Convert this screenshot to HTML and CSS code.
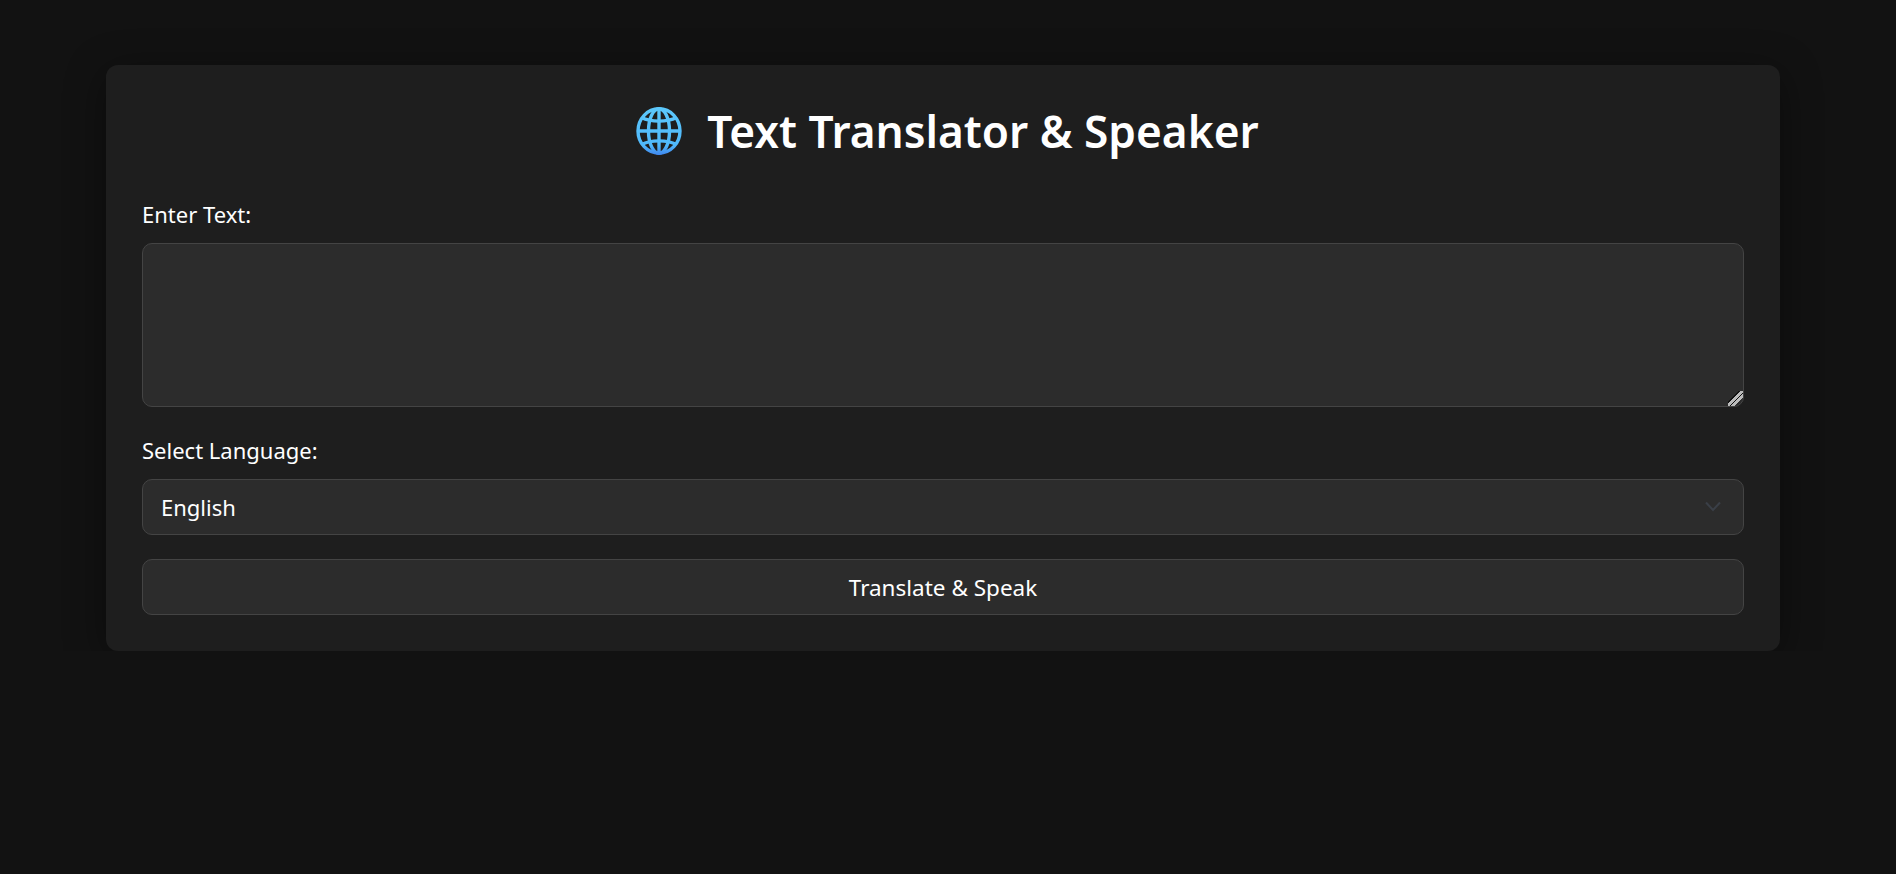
FILE: index.html
```html
<!DOCTYPE html>
<html lang="en">
<head>
<meta charset="UTF-8" />
<meta name="viewport" content="width=device-width, initial-scale=1" />
<title>Text Translator &amp; Speaker</title>
<link rel="stylesheet" href="styles.css">
</head>
<body>
  <div class="container">
    <h1>
      <svg class="globe" viewBox="0 0 46 48" aria-hidden="true">
        <defs>
          <linearGradient id="globeFill" gradientUnits="userSpaceOnUse" x1="0" y1="0" x2="0" y2="48">
            <stop offset="0" stop-color="#5cc8fb" />
            <stop offset="0.8" stop-color="#4fb8fb" />
            <stop offset="1" stop-color="#3f86ee" />
          </linearGradient>
        </defs>
        <g fill="none" stroke="url(#globeFill)" stroke-width="3.4">
          <ellipse cx="23" cy="24" rx="21" ry="22.2" />
          <ellipse cx="23" cy="24" rx="10.5" ry="22.2" />
          <path d="M23 2v44" />
          <path d="M2 24h42" />
          <path d="M5.500 10.500c5 2.600 11 3.600 17.500 3.600s12.500-1 17.500-3.600" />
          <path d="M5.500 37.500c5-2.600 11-3.600 17.500-3.600s12.500 1 17.500 3.600" />
        </g>
      </svg>
      <span>Text Translator &amp; Speaker</span>
    </h1>

    <label for="textInput">Enter Text:</label>
    <textarea id="textInput"></textarea>

    <label for="languageSelect">Select Language:</label>
    <div class="select-wrap">
      <select id="languageSelect">
        <option value="en" selected>English</option>
        <option value="es">Spanish</option>
        <option value="fr">French</option>
        <option value="de">German</option>
        <option value="hi">Hindi</option>
      </select>
      <svg class="chevron" viewBox="0 0 16 16" aria-hidden="true">
        <path d="M1 3.500l7 7.500 7-7.500" fill="none" stroke="#3a3f47" stroke-width="2" />
      </svg>
    </div>

    <button id="translateBtn">Translate &amp; Speak</button>
  </div>
</body>
</html>
```

FILE: styles.css
```css
body {
  font-family: 'Noto Sans', 'Open Sans', sans-serif;
  background: #121212;
  color: #fff;
  margin: 0;
  padding: 65px 10px 0 0;
}
.container {
  width: 1674px;
  margin: 0 auto;
  padding: 36px;
  box-sizing: border-box;
  background: #1e1e1e;
  border-radius: 12px;
  box-shadow: 0 8px 40px rgba(0,0,0,0.4);
}
h1 {
  display: flex;
  justify-content: center;
  align-items: center;
  gap: 25px;
  margin: 0 0 38px;
  font-size: 44.2px;
  line-height: 60px;
  font-weight: 600;
}
.globe {
  width: 46px;
  height: 48px;
  margin-left: 9px;
}
label {
  display: block;
  font-size: 22px;
  line-height: 30px;
  margin-bottom: 14px;
}
textarea, select, button {
  display: block;
  width: 100%;
  box-sizing: border-box;
  background: #2c2c2c;
  color: #fff;
  border: 1px solid #444;
  border-radius: 10px;
  font-family: inherit;
  font-size: 22px;
}
textarea {
  height: 164px;
  padding: 18px;
  margin-bottom: 28px;
  resize: vertical;
}
textarea::-webkit-resizer {
  background: linear-gradient(135deg, transparent 36%, #111 36%, #111 42%, #bbb 42%, #bbb 54%, #111 54%, #111 60%, #bbb 60%, #bbb 72%, transparent 72%);
}
.select-wrap {
  position: relative;
  margin-bottom: 24px;
}
select {
  height: 56px;
  padding: 0 18px;
  appearance: none;
}
.chevron {
  position: absolute;
  top: 20px;
  right: 23px;
  width: 16px;
  height: 16px;
}
button {
  height: 56px;
  font-size: 22.5px;
  cursor: pointer;
}
```
